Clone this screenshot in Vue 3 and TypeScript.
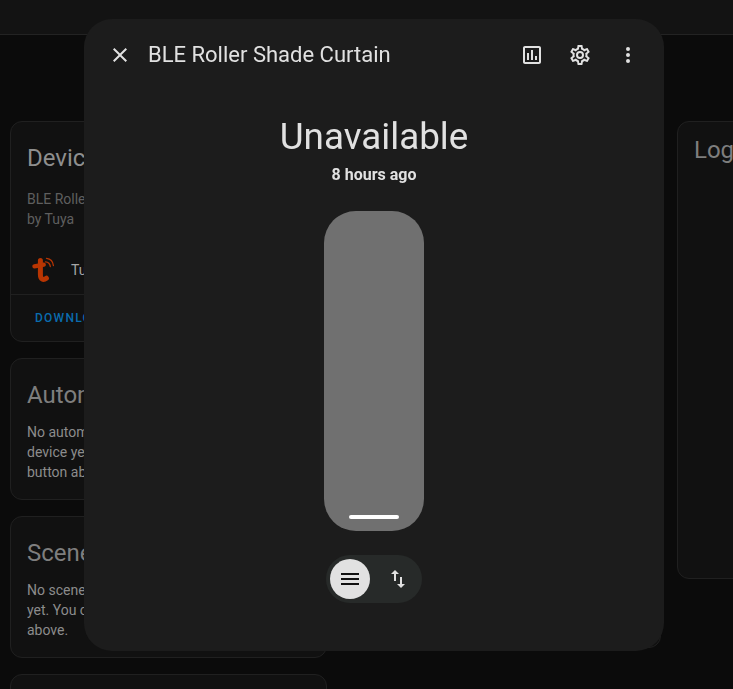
<script setup lang="ts">
const icons = {
  close: 'M19,6.41L17.59,5L12,10.59L6.41,5L5,6.41L10.59,12L5,17.59L6.41,19L12,13.41L17.59,19L19,17.59L13.41,12L19,6.41Z',
  chart: 'M9 17H7V10H9V17M13 17H11V7H13V17M17 17H15V13H17V17M19 19H5V5H19V19.1M19 3H5C3.9 3 3 3.9 3 5V19C3 20.1 3.9 21 5 21H19C20.1 21 21 20.1 21 19V5C21 3.9 20.1 3 19 3Z',
  cog: 'M12,8A4,4 0 0,1 16,12A4,4 0 0,1 12,16A4,4 0 0,1 8,12A4,4 0 0,1 12,8M12,10A2,2 0 0,0 10,12A2,2 0 0,0 12,14A2,2 0 0,0 14,12A2,2 0 0,0 12,10M10,22C9.75,22 9.54,21.82 9.5,21.58L9.13,18.93C8.5,18.68 7.96,18.34 7.44,17.94L4.95,18.95C4.73,19.03 4.46,18.95 4.34,18.73L2.34,15.27C2.21,15.05 2.27,14.78 2.46,14.63L4.57,12.97L4.5,12L4.57,11L2.46,9.37C2.27,9.22 2.21,8.95 2.34,8.73L4.34,5.27C4.46,5.05 4.73,4.96 4.95,5.05L7.44,6.05C7.96,5.66 8.5,5.32 9.13,5.07L9.5,2.42C9.54,2.18 9.75,2 10,2H14C14.25,2 14.46,2.18 14.5,2.42L14.87,5.07C15.5,5.32 16.04,5.66 16.56,6.05L19.05,5.05C19.27,4.96 19.54,5.05 19.66,5.27L21.66,8.73C21.79,8.95 21.73,9.22 21.54,9.37L19.43,11L19.5,12L19.43,13L21.54,14.63C21.73,14.78 21.79,15.05 21.66,15.27L19.66,18.73C19.54,18.95 19.27,19.04 19.05,18.95L16.56,17.95C16.04,18.34 15.5,18.68 14.87,18.93L14.5,21.58C14.46,21.82 14.25,22 14,22H10M11.25,4L10.88,6.61C9.68,6.86 8.62,7.5 7.85,8.39L5.44,7.35L4.69,8.65L6.8,10.2C6.4,11.37 6.4,12.64 6.8,13.8L4.68,15.36L5.43,16.66L7.86,15.62C8.63,16.5 9.68,17.14 10.87,17.38L11.24,20H12.76L13.13,17.39C14.32,17.14 15.37,16.5 16.14,15.62L18.57,16.66L19.32,15.36L17.2,13.81C17.6,12.64 17.6,11.37 17.2,10.2L19.31,8.65L18.56,7.35L16.15,8.39C15.38,7.5 14.32,6.86 13.12,6.62L12.75,4H11.25Z',
  dots: 'M12,16A2,2 0 0,1 14,18A2,2 0 0,1 12,20A2,2 0 0,1 10,18A2,2 0 0,1 12,16M12,10A2,2 0 0,1 14,12A2,2 0 0,1 12,14A2,2 0 0,1 10,12A2,2 0 0,1 12,10M12,4A2,2 0 0,1 14,6A2,2 0 0,1 12,8A2,2 0 0,1 10,6A2,2 0 0,1 12,4Z',
  menu: 'M3,6H21V8H3V6M3,11H21V13H3V11M3,16H21V18H3V16Z',
  swap: 'M9,3L5,7H8V14H10V7H13M16,17V10H14V17H11L15,21L19,17H16Z',
}
const actions = [icons.chart, icons.cog, icons.dots]
</script>

<template>
  <div class="page">
    <header class="topbar"></header>
    <main class="columns">
      <section class="column">
        <article class="card device">
          <h2>Device info</h2>
          <p class="muted">BLE Roller Shade Curtain<br />by Tuya</p>
          <div class="integration">
            <svg class="tuya" viewBox="0 0 26 30" width="26" height="30">
              <g fill="none" stroke="#b83502" stroke-linecap="round">
                <path d="M4.4 11.4 L13.8 9.6" stroke-width="4.2" />
                <path d="M10.4 5.6 L10.4 19.5 C10.4 24.6 13.4 25.4 16.4 23.2" stroke-width="5" />
                <path d="M15.5 6.8 C18 7 20 9 20.3 11.5" stroke-width="1.3" />
                <path d="M16.5 3.3 C20.5 3.8 23 6.8 23.4 10.5" stroke-width="1.3" />
              </g>
            </svg>
            <span>Tuya</span>
          </div>
          <div class="card-actions">Download diagnostics</div>
        </article>
        <article class="card">
          <h2>Automations</h2>
          <p>No automations have been set up using this device yet. You can add one by clicking the + button above.</p>
        </article>
        <article class="card">
          <h2>Scenes</h2>
          <p>No scenes have been added using this device yet. You can add one by clicking the + button above.</p>
        </article>
        <article class="card filler"></article>
      </section>
      <section class="column">
        <article class="card middle"></article>
      </section>
      <section class="column">
        <article class="card logbook">
          <h2>Logbook</h2>
        </article>
      </section>
    </main>

    <div class="dialog">
      <div class="dialog-header">
        <button class="icon-button" aria-label="Close">
          <svg viewBox="0 0 24 24" width="24" height="24"><path :d="icons.close" /></svg>
        </button>
        <h1>BLE Roller Shade Curtain</h1>
        <button v-for="(d, i) in actions" :key="i" class="icon-button">
          <svg viewBox="0 0 24 24" width="24" height="24"><path :d="d" /></svg>
        </button>
      </div>
      <div class="state">Unavailable</div>
      <div class="changed">8 hours ago</div>
      <div class="slider"><span class="handle"></span></div>
      <div class="modes">
        <button class="mode active">
          <svg viewBox="0 0 24 24" width="24" height="24"><path :d="icons.menu" /></svg>
        </button>
        <button class="mode">
          <svg viewBox="0 0 24 24" width="24" height="24"><path :d="icons.swap" /></svg>
        </button>
      </div>
    </div>
  </div>
</template>

<style>
html, body { margin: 0; background: #0b0b0b; }
</style>

<style scoped>
.page {
  position: relative;
  width: 733px;
  height: 689px;
  overflow: hidden;
  background: #0b0b0b;
  font-family: Roboto, "Liberation Sans", sans-serif;
}
.topbar {
  height: 34px;
  background: #131313;
  border-bottom: 1px solid #232323;
}
.columns {
  display: flex;
  gap: 16.5px;
  padding: 86px 0 0 10px;
}
.column {
  flex: 0 0 317px;
  display: flex;
  flex-direction: column;
  gap: 16px;
}
.card {
  box-sizing: border-box;
  flex: none;
  padding: 20px 0 17px;
  border: 1px solid #202020;
  border-radius: 12px;
  background: #111111;
}
.card h2 {
  margin: 0;
  padding: 0 16px;
  font-size: 24px;
  line-height: 32px;
  font-weight: 400;
  color: #7e7e7e;
}
.card p {
  margin: 11px 0 0;
  padding: 0 16px;
  font-size: 14px;
  line-height: 20px;
  color: #8c8c8c;
}
.device h2 { color: #8e8e8e; }
.card p.muted { margin-top: 15px; color: #5f5f5f; }
.device { height: 221px; padding-bottom: 0; }
.filler { height: 120px; }
.integration {
  display: flex;
  align-items: center;
  gap: 15px;
  height: 50px;
  margin-top: 16px;
  padding: 0 19px;
  font-size: 14px;
  color: #a6a6a6;
  border-bottom: 1px solid #202020;
  box-sizing: border-box;
}
.tuya { flex: none; }
.card-actions {
  padding: 15px 24px 0;
  font-size: 12px;
  line-height: 16px;
  font-weight: 500;
  letter-spacing: 1.25px;
  text-transform: uppercase;
  color: #0a6cae;
}
.middle { height: 527px; }
.logbook { height: 458px; padding-top: 12px; }

.dialog {
  position: absolute;
  left: 84px;
  top: 19px;
  width: 580px;
  height: 632px;
  display: flex;
  flex-direction: column;
  align-items: center;
  border-radius: 28px;
  background: #1c1c1c;
  color: #e1e1e1;
  will-change: transform;
}
.dialog-header {
  align-self: stretch;
  display: flex;
  align-items: center;
  padding: 12px 12px 0;
}
.dialog-header h1 {
  flex: 1;
  margin: 0 0 0 4px;
  font-size: 22px;
  line-height: 28px;
  font-weight: 400;
  color: #e1e1e1;
}
.icon-button {
  width: 48px;
  height: 48px;
  display: flex;
  align-items: center;
  justify-content: center;
  padding: 0;
  border: 0;
  background: none;
}
.icon-button svg { fill: #e1e1e1; }
.state {
  margin-top: 28px;
  font-size: 36.8px;
  line-height: 60px;
  color: #e1e1e1;
}
.changed {
  margin-top: -4px;
  font-size: 16px;
  line-height: 24px;
  font-weight: 700;
  color: #e1e1e1;
}
.slider {
  position: relative;
  margin-top: 24px;
  width: 100px;
  height: 320px;
  border-radius: 32px;
  background: #707070;
}
.handle {
  position: absolute;
  left: 25px;
  bottom: 12px;
  width: 50px;
  height: 4px;
  border-radius: 2px;
  background: #ffffff;
}
.modes {
  display: flex;
  gap: 8px;
  margin-top: 24px;
  padding: 4px;
  border-radius: 24px;
  background: #272a29;
}
.mode {
  width: 40px;
  height: 40px;
  display: flex;
  align-items: center;
  justify-content: center;
  padding: 0;
  border: 0;
  border-radius: 50%;
  background: none;
}
.mode svg { fill: #e1e1e1; }
.mode.active { background: #e1e1e1; }
.mode.active svg { fill: #111111; }
</style>
